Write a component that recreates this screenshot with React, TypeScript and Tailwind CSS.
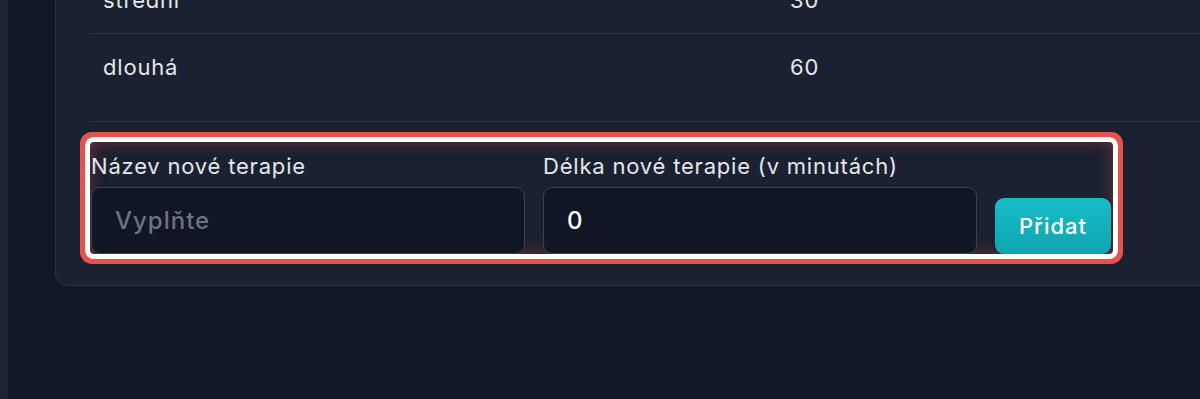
import React from "react";

const rows = [
  { name: "střední", minutes: 30 },
  { name: "dlouhá", minutes: 60 },
];

export default function App() {
  return (
    <div
      className="flex h-[399px] w-[1200px] overflow-hidden bg-[#121826] text-[#e5e7eb]"
      style={{ fontFamily: "Inter, 'Noto Sans', sans-serif" }}
    >
      <div className="w-[8px] shrink-0 bg-[#1b2230]" />
      <div className="flex-1 pl-[47px]">
        <div className="mt-[-33px] w-[1200px] rounded-[12px] border border-[#2a3241] bg-[#1a2130] pb-[31px] pl-[34px]">
          <div className="grid grid-cols-[700px_1fr] text-[22px] tracking-[0.8px]">
            {rows.map((r, i) => (
              <div key={r.name} className="contents">
                <div
                  className={
                    "flex h-[66px] items-center pl-[13px] " +
                    (i === 0 ? "border-b border-[#2d3544]" : "")
                  }
                >
                  {r.name}
                </div>
                <div
                  className={
                    "flex h-[66px] items-center " +
                    (i === 0 ? "border-b border-[#2d3544]" : "")
                  }
                >
                  {r.minutes}
                </div>
              </div>
            ))}
          </div>
          <div className="mt-[21px] border-t border-[#2d3544] pt-[20px]">
            <div className="flex w-fit items-end gap-[18px] rounded-[4px] pt-[11px] pl-[1px] pr-[2px] shadow-[inset_0_0_16px_rgba(229,83,75,0.4),0_0_0_5px_#ffffff,0_0_0_10px_#e5534b]">
              <label className="flex w-[434px] flex-col gap-[8px]">
                <span className="text-[22px] leading-[26px] tracking-[0.8px] text-[#e5e7eb]">Název nové terapie</span>
                <input
                  placeholder="Vyplňte"
                  className="h-[67px] rounded-[9px] border border-[#3a4252] bg-[#111625] px-[23px] text-[24px] font-medium tracking-[1px] text-white outline-none placeholder:text-[#6b7280]"
                />
              </label>
              <label className="flex w-[434px] flex-col gap-[8px]">
                <span className="text-[22px] leading-[26px] tracking-[0.8px] text-[#e5e7eb]">Délka nové terapie (v minutách)</span>
                <input
                  defaultValue="0"
                  className="h-[67px] rounded-[9px] border border-[#3a4252] bg-[#111625] px-[23px] text-[24px] font-medium tracking-[1px] text-white outline-none"
                />
              </label>
              <button className="h-[56px] w-[116px] rounded-[9px] bg-gradient-to-b from-[#18bcc8] to-[#0ea5b0] text-[22px] font-medium tracking-[1px] text-white">
                Přidat
              </button>
            </div>
          </div>
        </div>
      </div>
    </div>
  );
}
